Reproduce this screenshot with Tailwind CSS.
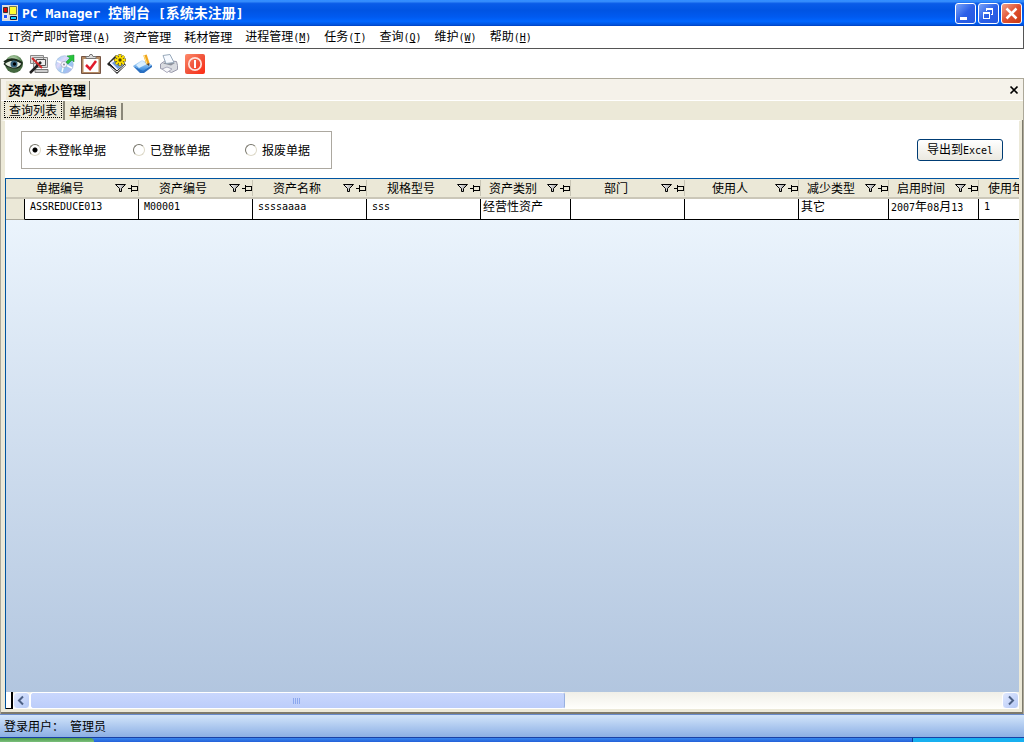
<!DOCTYPE html>
<html lang="zh-CN">
<head>
<meta charset="utf-8">
<title>PC Manager 控制台</title>
<script src="https://cdn.jsdelivr.net/npm/@tailwindcss/browser@4"></script>
</head>
<body class="flex h-screen flex-col overflow-hidden bg-white font-['Noto_Sans_CJK_SC',sans-serif] text-[12px] leading-4 text-black">
<svg class="absolute h-0 w-0" aria-hidden="true">
  <defs>
    <linearGradient id="funnel" x1="0" x2="1"><stop offset="0" stop-color="#fff"/><stop offset="1" stop-color="#999"/></linearGradient>
    <radialGradient id="ball" cx=".45" cy=".3"><stop offset="0" stop-color="#d7ead0"/><stop offset=".6" stop-color="#7fa878"/><stop offset="1" stop-color="#44683f"/></radialGradient>
    <linearGradient id="disc" x1="0" y1="0" x2="1" y2="1"><stop offset="0" stop-color="#8fcdf5"/><stop offset=".35" stop-color="#e0d8fa"/><stop offset=".6" stop-color="#95c8f0"/><stop offset="1" stop-color="#c0b0f0"/></linearGradient>
    <linearGradient id="power" x1="0" y1="0" x2="1" y2="1"><stop offset="0" stop-color="#ff8a6a"/><stop offset=".5" stop-color="#f0553c"/><stop offset="1" stop-color="#ff2a12"/></linearGradient>
    <linearGradient id="page" x1="0" y1="0" x2="0" y2="1"><stop offset="0" stop-color="#d5ecff"/><stop offset="1" stop-color="#2d86dd"/></linearGradient>
  </defs>
  <symbol id="filter" viewBox="0 0 12 10"><path d="M.5 1.500h10L6.500 5.500v3h-2v-3z" fill="url(#funnel)" stroke="#000"/></symbol>
  <symbol id="pin" viewBox="0 0 10 10"><path d="M0 5.500h3M3.500 2v7M4 3.500h5M9.500 3v5M4 7.500h5" fill="none" stroke="#000"/><path d="M4 7h5v1H4z"/></symbol>
</svg>

<header class="flex h-[26px] shrink-0 items-center bg-[linear-gradient(#2a86ff_0,#3d95ff_4%,#0a5ce8_14%,#0054e3_40%,#005af0_65%,#0066ff_82%,#0054e0_94%,#0040c0_100%)] pr-0.5 pl-0.5 text-white">
  <svg class="h-4 w-4 shrink-0" viewBox="0 0 16 16"><path fill="#ddd" d="M0 0h16v16H0z"/><path fill="#d00" stroke="#333" d="M1.500 2.500h4v5h-4z"/><path fill="#ff3" stroke="#775" d="M7.500 1.500h7v8h-7z"/><path fill="#25f" stroke="#eee" d="M1.500 9.500h4v4h-4z"/><path fill="#1cf" stroke="#113" d="M8.500 11.500h6v3h-6z"/></svg>
  <h1 class="flex-1 pl-1 text-[14px] font-bold whitespace-pre"><span class="font-['DejaVu_Sans_Mono',monospace] text-[13px]">PC Manager </span>控制台<span class="font-['DejaVu_Sans_Mono',monospace] text-[13px]"> [</span>系统未注册<span class="font-['DejaVu_Sans_Mono',monospace] text-[13px]">]</span></h1>
  <div class="flex gap-0.5">
    <button aria-label="最小化" class="h-[21px] w-[21px] rounded-[3px] border border-white bg-linear-to-br from-[#7aa2f8] via-[#2c60e8] to-[#2458e0]"><svg viewBox="0 0 19 19"><path fill="#fff" d="M4 13h7v3H4z"/></svg></button>
    <button aria-label="还原" class="h-[21px] w-[21px] rounded-[3px] border border-white bg-linear-to-br from-[#7aa2f8] via-[#2c60e8] to-[#2458e0]"><svg viewBox="0 0 19 19" fill="none" stroke="#fff"><path d="M7 4.500h7M7.500 4v3M7 5.500h7M13.500 5v6M12 10.500h2M4 8.500h7M4.500 8v7M4 9.500h7M10.500 8v7M4 14.500h7"/></svg></button>
    <button aria-label="关闭" class="h-[21px] w-[21px] rounded-[3px] border border-white bg-linear-to-br from-[#f0a088] via-[#e05030] to-[#c83a10]"><svg viewBox="0 0 19 19"><path fill="none" stroke="#fff" stroke-width="2.500" d="M4.500 4.500l10 10M14.500 4.500l-10 10"/></svg></button>
  </div>
</header>

<nav class="flex h-[23px] shrink-0 items-center gap-[13px] border-r border-b border-[#555] pl-2 whitespace-nowrap">
  <button><span class="font-['DejaVu_Sans_Mono',monospace] text-[10px]">IT</span>资产即时管理<span class="font-['DejaVu_Sans_Mono',monospace] text-[10px]">(<u>A</u>)</span></button>
  <button>资产管理</button>
  <button>耗材管理</button>
  <button>进程管理<span class="font-['DejaVu_Sans_Mono',monospace] text-[10px]">(<u>M</u>)</span></button>
  <button>任务<span class="font-['DejaVu_Sans_Mono',monospace] text-[10px]">(<u>T</u>)</span></button>
  <button>查询<span class="font-['DejaVu_Sans_Mono',monospace] text-[10px]">(<u>Q</u>)</span></button>
  <button>维护<span class="font-['DejaVu_Sans_Mono',monospace] text-[10px]">(<u>W</u>)</span></button>
  <button>帮助<span class="font-['DejaVu_Sans_Mono',monospace] text-[10px]">(<u>H</u>)</span></button>
</nav>

<div role="toolbar" class="flex h-[29px] shrink-0 items-center gap-1.5 pl-[3px]">
  <button aria-label="监控" class="h-5 w-5"><svg viewBox="0 0 20 20"><circle cx="11" cy="10" r="9" fill="url(#ball)"/><path d="M1 10Q9 3 19 9Q17 15 9 14Q4 13 1 10" fill="#e6efe2" stroke="#1c2a1c" stroke-width="1.200"/><path d="M1 8Q9 2 19 9" fill="none" stroke="#1c2a1c" stroke-width="2"/><circle cx="11" cy="10" r="3.500" fill="#35607a"/><circle cx="11.500" cy="10" r="1.700" fill="#000"/></svg></button>
  <button aria-label="配置" class="h-5 w-5"><svg viewBox="0 0 20 20"><path fill="#ddd" stroke="#888" d="M1.500 1.500h13v8h-13zM4.500 3.500h14v10h-14z"/><path fill="#eee" stroke="#555" d="M7.500 5.500h9v6h-9z"/><path fill="#ccc" stroke="#777" d="M6 15.500h13v3H6z"/><path d="M1 19L12 8" stroke="#222" stroke-width="2.500"/><path d="M3 4L13 14" stroke="#d42b2b" stroke-width="2"/></svg></button>
  <button aria-label="软件" class="h-5 w-5"><svg viewBox="0 0 20 20"><circle cx="9.500" cy="10.500" r="8.800" fill="url(#disc)" stroke="#9fb8d8" stroke-width=".6"/><path d="M9 10L2 7M9 10l-2 8M9 10l8 4" stroke="#fff" stroke-width="1.500"/><circle cx="9" cy="10.500" r="3" fill="#f5f5ff" stroke="#99a" stroke-width=".6"/><circle cx="9" cy="10.500" r="1" fill="#889"/><path fill="#27c33c" stroke="#138a28" stroke-width=".5" d="M12 2l7-1v7l-2-2-4 4-2-2 4-4z"/></svg></button>
  <button aria-label="任务" class="h-5 w-5"><svg viewBox="0 0 20 20"><path fill="#b48a62" stroke="#754" d="M.5 2.500h19v17H.5z"/><path fill="#fff" d="M2.500 5h15v13h-15z"/><path fill="#ddd" stroke="#777" d="M5 4.500h10v-2h-3L11 .5H9L8 2.500H5z"/><path d="M5 11l4 4 6-8" fill="none" stroke="#e11b2b" stroke-width="2.500"/></svg></button>
  <button aria-label="设置" class="h-5 w-5"><svg viewBox="0 0 20 20"><path fill="#222" d="M0 10L9 1l10 10-9 9z"/><path fill="#eef" stroke="#222" d="M2 9l8-7 8 8-8 7z"/><path fill="#6c9bd8" d="M5 9l6 6 5-4-6-5z"/><path d="M2 12l8 6 8-7" fill="none" stroke="#fff"/><g stroke="#665500" stroke-width="3"><path d="M13 0v12M7 6h12M9 2l8 8M17 2l-8 8"/></g><g stroke="#ffe100" stroke-width="2"><path d="M13 .5v11M7.500 6h11M9 2l8 8M17 2l-8 8"/></g><circle cx="13" cy="6" r="1.700" fill="#554700"/></svg></button>
  <button aria-label="编辑" class="h-5 w-5"><svg viewBox="0 0 20 20"><path fill="#2b6fc0" d="M0 12l7 7h4l8-6v-2l-9 5z"/><path fill="url(#page)" d="M0 12l9-6 10 5-9 6z"/><path fill="#d9efff" d="M3 11l6-4 5 3-8 4z"/><path d="M12 1l3 9" stroke="#f0a61e" stroke-width="3.500"/><path d="M11 1l3 9" stroke="#ffe38a"/><path fill="#543" d="M13.500 10l3-1-.5 3z"/></svg></button>
  <button aria-label="打印" class="h-5 w-5"><svg viewBox="0 0 20 20"><path fill="#d9dbe0" stroke="#99a" d="M1.500 10l5-3.500 11 1 1 4v4l-6 3-11-4z"/><path fill="#8b8f99" d="M4 9.500l3-1.500 9 1-4 2.500z"/><path fill="#f7faff" stroke="#9ab" d="M4 1.500l7-1 4 8-8 1z"/><path fill="#f8f8fa" stroke="#aab" d="M3 15l5-2 5 2-5 3.500z"/></svg></button>
  <button aria-label="退出" class="h-5 w-5"><svg viewBox="0 0 20 20"><rect width="20" height="20" rx="2" fill="url(#power)"/><circle cx="10" cy="10" r="6.200" fill="none" stroke="#ffe2da" stroke-width="1.700"/><path d="M10 6v8" stroke="#fff" stroke-width="2"/></svg></button>
</div>

<main class="flex min-h-0 flex-1 flex-col border border-b-0 border-[#aca899] bg-[#ece9d8]">
  <div class="flex h-[22px] shrink-0 items-end justify-between border-b border-white bg-[#f5f2ea] pr-1 pl-[5px]">
    <h2 class="flex h-[19px] items-center border-r border-[#716f64] bg-[#ece9d8] pr-[3px] pb-0.5 pl-0.5 text-[13px] font-bold">资产减少管理</h2>
    <button aria-label="关闭页" class="mb-[5px] h-2.5 w-2.5"><svg viewBox="0 0 10 10"><path d="M1.500 1.500l7 7M8.500 1.500l-7 7" stroke="#000" stroke-width="1.700"/></svg></button>
  </div>

  <div role="tablist" class="flex h-[19px] shrink-0 items-end pl-[3px]">
    <button role="tab" aria-selected="true" class="flex h-[19px] items-start border-r-2 border-[#8a8778] pr-px"><span class="border border-dotted border-black px-1 leading-[15px]">查询列表</span></button>
    <button role="tab" class="h-[17px] border-r-2 border-[#8a8778] pr-1 pl-1">单据编辑</button>
  </div>

  <div class="flex min-h-0 flex-1 flex-col border-r border-b-2 border-[#7d7a6c]">
  <section class="flex min-h-0 flex-1 flex-col border-t border-r-[3px] border-l-4 border-[#ece9d8] border-t-white bg-white">
    <div class="flex items-center justify-between pt-[10px] pr-4 pb-[9px] pl-4">
      <fieldset class="flex h-[38px] w-[311px] items-center gap-[27px] border border-[#aca8a0] pl-[7px]">
        <label class="flex items-center gap-[5px]"><input type="radio" name="state" checked class="h-3 w-3 appearance-none rounded-full border border-[#ddd9c8] border-t-[#77756a] border-l-[#77756a] bg-white checked:bg-[radial-gradient(#000_2px,transparent_3px)]">未登帐单据</label>
        <label class="flex items-center gap-[5px]"><input type="radio" name="state" class="h-3 w-3 appearance-none rounded-full border border-[#ddd9c8] border-t-[#77756a] border-l-[#77756a] bg-white">已登帐单据</label>
        <label class="ml-2 flex items-center gap-[5px]"><input type="radio" name="state" class="h-3 w-3 appearance-none rounded-full border border-[#ddd9c8] border-t-[#77756a] border-l-[#77756a] bg-white">报废单据</label>
      </fieldset>
      <button class="h-[22px] w-[86px] rounded-[3px] border border-[#003c74] bg-linear-to-b from-white to-[#ebe9e0] leading-4 whitespace-nowrap">导出到<span class="font-['DejaVu_Sans_Mono',monospace] text-[10px]">Excel</span></button>
    </div>

    <div class="flex min-h-0 flex-1 flex-col border-t border-l border-[#0054a0] bg-linear-to-b from-[#f0f8ff] to-[#b0c4de]">
      <div class="min-h-0 flex-1 overflow-hidden">
        <table class="w-[1100px] table-fixed border-separate border-spacing-0">
          <colgroup><col class="w-[19px]"><col class="w-[114px]"><col class="w-[114px]"><col class="w-[114px]"><col class="w-[114px]"><col class="w-[90px]"><col class="w-[114px]"><col class="w-[114px]"><col class="w-[90px]"><col class="w-[90px]"><col></colgroup>
          <thead>
            <tr class="h-[20px] [&>th]:border-b-2 [&>th]:border-[#cbc7b8] [&>th]:bg-[#ebe8d7] [&>th]:p-0 [&>th]:font-normal">
              <th></th>
              <th><div class="flex items-center border-r border-[#c8c5b5]"><span class="flex-1 pr-5">单据编号</span><svg class="h-2.5 w-3"><use href="#filter"/></svg><svg class="ml-px h-2.5 w-2.5"><use href="#pin"/></svg></div></th>
              <th><div class="flex items-center border-r border-[#c8c5b5]"><span class="flex-1 pr-0.5">资产编号</span><svg class="h-2.5 w-3"><use href="#filter"/></svg><svg class="ml-px h-2.5 w-2.5"><use href="#pin"/></svg></div></th>
              <th><div class="flex items-center border-r border-[#c8c5b5]"><span class="flex-1 pr-0.5">资产名称</span><svg class="h-2.5 w-3"><use href="#filter"/></svg><svg class="ml-px h-2.5 w-2.5"><use href="#pin"/></svg></div></th>
              <th><div class="flex items-center border-r border-[#c8c5b5]"><span class="flex-1 pr-0.5">规格型号</span><svg class="h-2.5 w-3"><use href="#filter"/></svg><svg class="ml-px h-2.5 w-2.5"><use href="#pin"/></svg></div></th>
              <th><div class="flex items-center border-r border-[#c8c5b5]"><span class="flex-1 pr-0.5">资产类别</span><svg class="h-2.5 w-3"><use href="#filter"/></svg><svg class="ml-px h-2.5 w-2.5"><use href="#pin"/></svg></div></th>
              <th><div class="flex items-center border-r border-[#c8c5b5]"><span class="flex-1">部门</span><svg class="h-2.5 w-3"><use href="#filter"/></svg><svg class="ml-px h-2.5 w-2.5"><use href="#pin"/></svg></div></th>
              <th><div class="flex items-center border-r border-[#c8c5b5]"><span class="flex-1">使用人</span><svg class="h-2.5 w-3"><use href="#filter"/></svg><svg class="ml-px h-2.5 w-2.5"><use href="#pin"/></svg></div></th>
              <th><div class="flex items-center border-r border-[#c8c5b5]"><span class="flex-1 pr-0.5">减少类型</span><svg class="h-2.5 w-3"><use href="#filter"/></svg><svg class="ml-px h-2.5 w-2.5"><use href="#pin"/></svg></div></th>
              <th><div class="flex items-center border-r border-[#c8c5b5]"><span class="flex-1 pr-0.5">启用时间</span><svg class="h-2.5 w-3"><use href="#filter"/></svg><svg class="ml-px h-2.5 w-2.5"><use href="#pin"/></svg></div></th>
              <th class="text-left"><span class="pl-[9px]">使用年限</span></th>
            </tr>
          </thead>
          <tbody>
            <tr class="h-[21px] [&>td]:border-r [&>td]:border-b [&>td]:border-black [&>td]:bg-white [&>td]:py-0 [&>td]:pr-0 [&>td]:align-top">
              <th class="border-r border-b border-r-black border-b-[#aca899] bg-[#ebe8d7]"></th>
              <td class="pl-[5px] font-['DejaVu_Sans_Mono',monospace] text-[10px]">ASSREDUCE013</td>
              <td class="pl-[5px] font-['DejaVu_Sans_Mono',monospace] text-[10px]">M00001</td>
              <td class="pl-[5px] font-['DejaVu_Sans_Mono',monospace] text-[10px]">ssssaaaa</td>
              <td class="pl-[5px] font-['DejaVu_Sans_Mono',monospace] text-[10px]">sss</td>
              <td class="pl-0.5 leading-[14px]">经营性资产</td>
              <td></td>
              <td></td>
              <td class="pl-0.5 leading-[14px]">其它</td>
              <td class="pl-0.5 leading-[14px] whitespace-nowrap"><span class="font-['DejaVu_Sans_Mono',monospace] text-[10px]">2007</span>年<span class="font-['DejaVu_Sans_Mono',monospace] text-[10px]">08</span>月<span class="font-['DejaVu_Sans_Mono',monospace] text-[10px]">13</span></td>
              <td class="pl-[5px] font-['DejaVu_Sans_Mono',monospace] text-[10px]">1</td>
            </tr>
          </tbody>
        </table>
      </div>
      <div class="flex h-[17px] shrink-0 items-stretch bg-linear-to-b from-[#f0efe8] to-[#fffffc]">
        <div class="w-[7px] border-r-2 border-b border-black bg-white"></div>
        <button aria-label="向左滚动" class="w-[17px] rounded-sm border border-white bg-linear-to-br from-[#e0e8fe] to-[#b4c8f6]"><svg viewBox="0 0 15 15"><path d="M9 3.500l-4 4 4 4" fill="none" stroke="#4d6185" stroke-width="2"/></svg></button>
        <div class="flex flex-1">
          <button aria-label="水平滚动块" class="flex w-[55%] items-center justify-center rounded-[3px] border border-white border-r-[#98b0e0] bg-linear-to-b from-[#c9d7fd] to-[#bccdfa]"><svg class="h-1.5 w-2" viewBox="0 0 8 6"><path d="M.5 0v6M2.500 0v6M4.500 0v6M6.500 0v6" stroke="#8ca8ee"/></svg></button>
        </div>
        <button aria-label="向右滚动" class="w-[17px] rounded-sm border border-white bg-linear-to-br from-[#e0e8fe] to-[#b4c8f6]"><svg viewBox="0 0 15 15"><path d="M6 3.500l4 4-4 4" fill="none" stroke="#4d6185" stroke-width="2"/></svg></button>
      </div>
    </div>
    <div class="h-[3px] shrink-0 bg-[#ece9d8]"></div>
  </section>
  </div>
</main>

<footer class="shrink-0">
  <div class="flex h-[23px] items-center gap-1.5 border-t border-[#6a8ccb] bg-linear-to-b from-[#d3e5fa] to-[#8cafe4] pb-px pl-1"><span>登录用户：</span><span>管理员</span></div>
  <div class="flex h-[5px] border-t border-[#1941a5] bg-linear-to-b from-[#3a86ee] to-[#2460d8]">
    <div class="w-[94px] rounded-tr-sm bg-linear-to-b from-[#4c9a4c] to-[#7cc07c]"></div>
    <div class="ml-auto w-[112px] border-l border-[#0a3c9c] bg-[#18b0f0]"></div>
  </div>
</footer>
</body>
</html>
